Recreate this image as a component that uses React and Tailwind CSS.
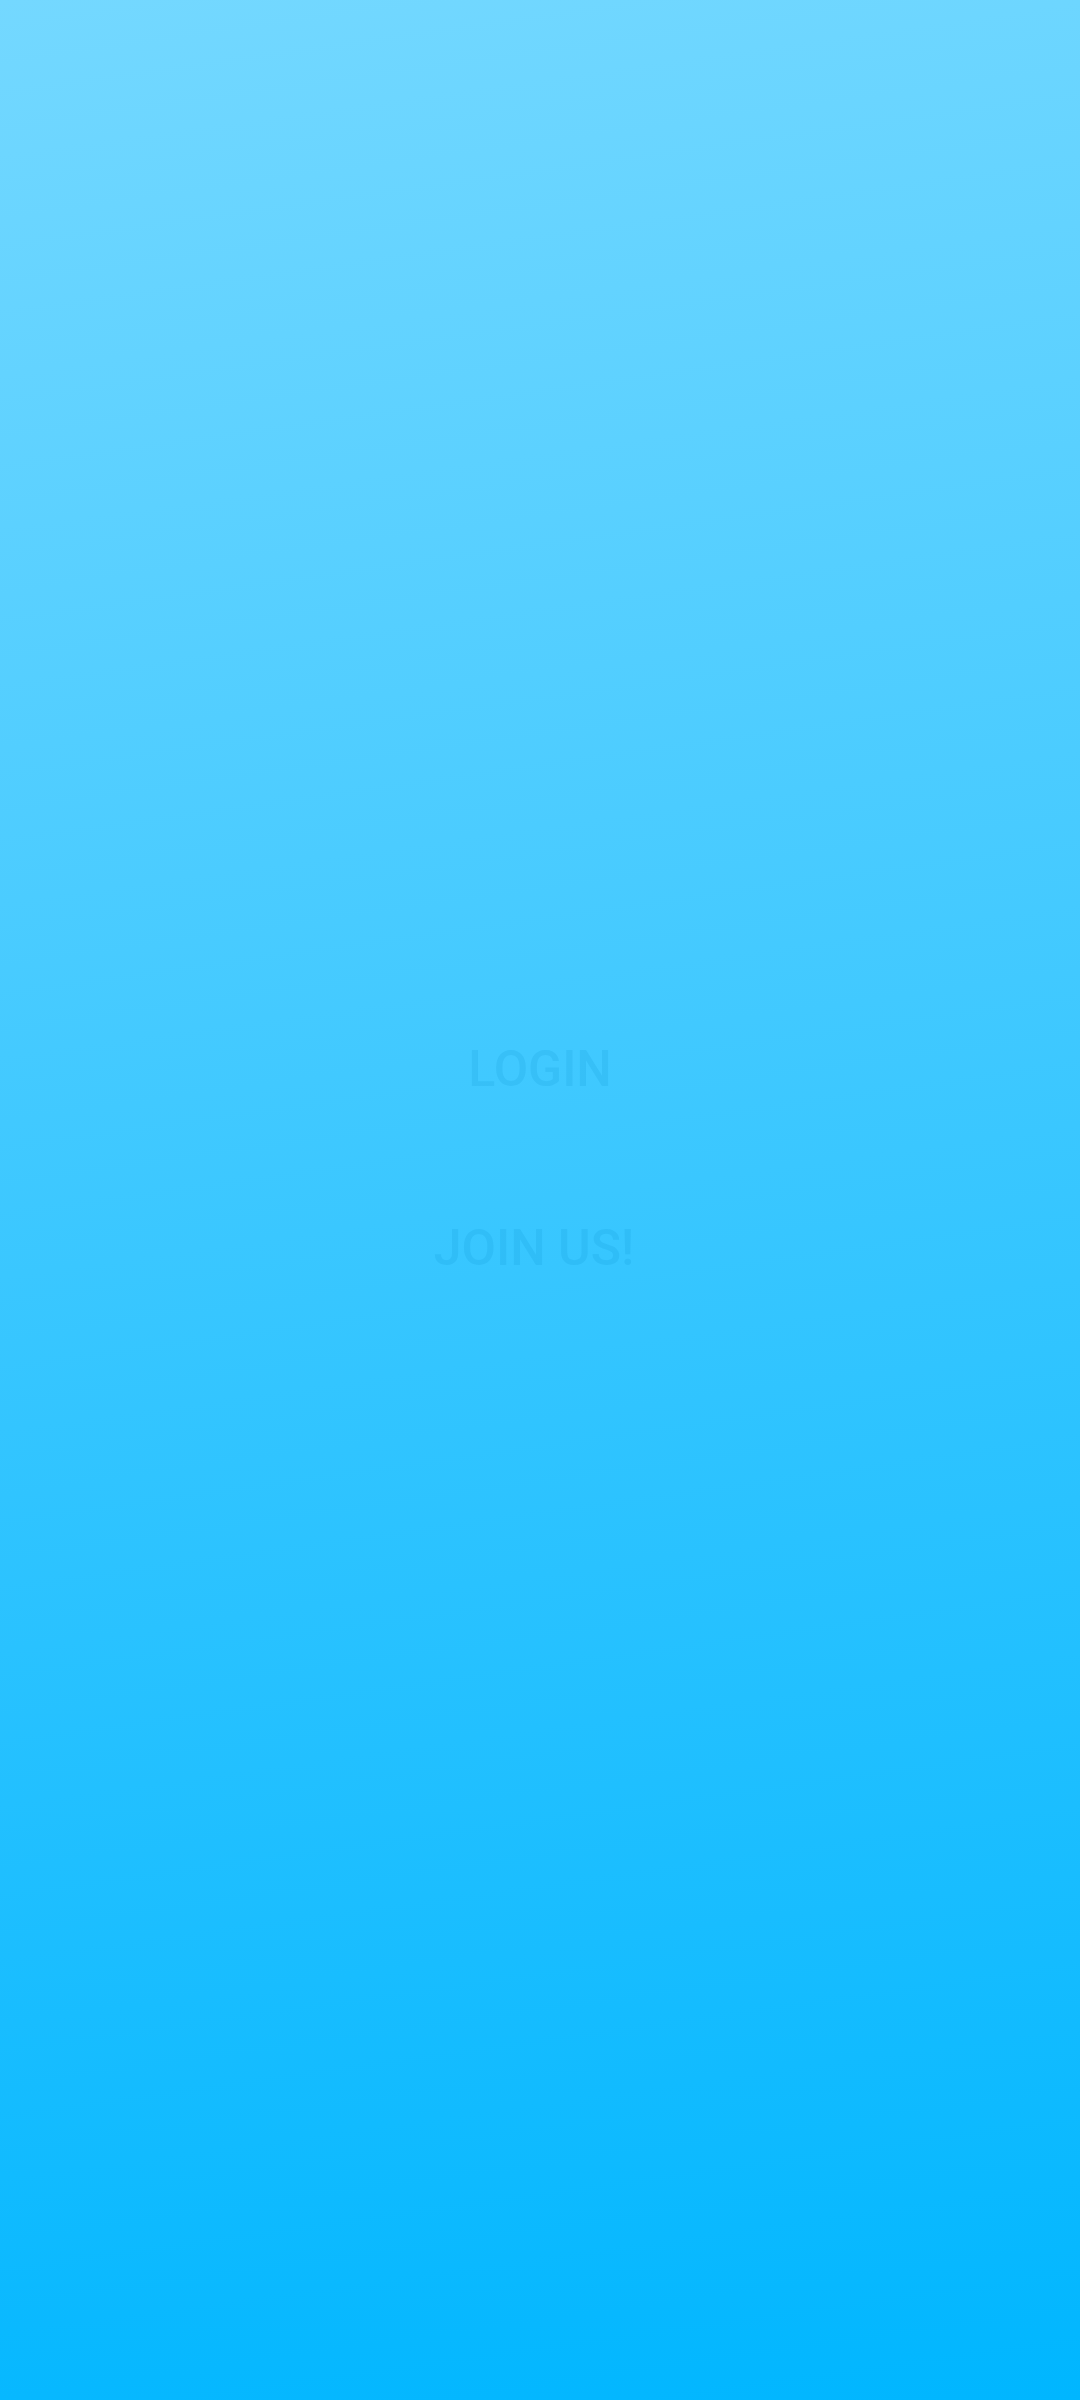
const App = () => {
  return (
    <section
      className="w-full h-[2400px] flex flex-col items-center bg-linear-[172deg] from-[#74d8ff] to-[#00b6ff]"
      style={{ fontFamily: "Roboto, 'Liberation Sans', sans-serif" }}
    >
      {/* Buttons */}
      <div className="flex flex-col items-center pt-[1040px]">
        <button className="text-[50px] leading-[58px] font-medium text-[#0a8ccc]/15">
          LOGIN
        </button>
        <button className="mt-[121px] -ml-[12px] text-[50px] leading-[58px] font-medium text-[#0a8ccc]/15">
          JOIN US!
        </button>
      </div>
    </section>
  );
};

export default App;
